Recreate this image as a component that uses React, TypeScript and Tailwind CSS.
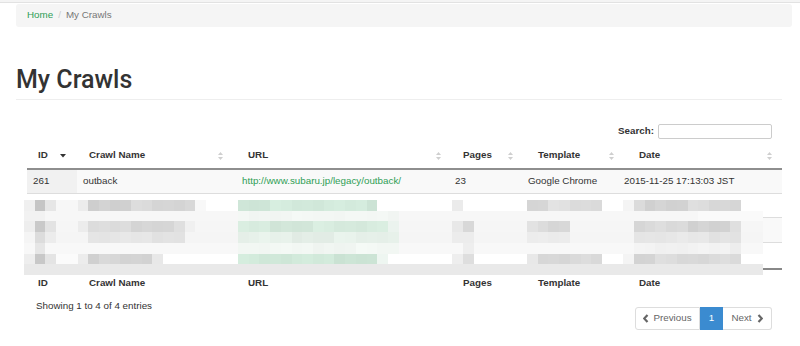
import React from 'react';

// blurred-out rows in the screenshot: a 69 x 7 mosaic of ~10.7px cells
type Seg = [number, number, string, number?];

const mosaicRows: { base: string; segs: Seg[] }[] = [
  {
    base: '#ffffff',
    segs: [
      [0, 1, '#f0f0f0'], [1, 2, '#c5c5c5'], [2, 3, '#e6e6e6'], [3, 5, '#f7f7f7'], [5, 6, '#ececec'],
      [6, 16, '#d6d6d6', 8], [16, 17, '#f8f8f8'], [20, 33, '#d2e9db', 6], [40, 41, '#ebebeb'],
      [47, 54, '#dcdcdc', 8], [56, 57, '#f4f4f4'], [57, 67, '#d8d8d8', 8],
    ],
  },
  { base: '#f7f7f7', segs: [[0, 2, '#f2f2f2'], [20, 35, '#f3f7f4', 2], [63, 69, '#fafafa']] },
  {
    base: '#f6f6f6',
    segs: [
      [0, 1, '#eeeeee'], [1, 2, '#c9c9c9'], [2, 3, '#e3e3e3'], [5, 6, '#ececec'], [6, 15, '#dadada', 6],
      [15, 16, '#f0f0f0'], [20, 34, '#d6eadd', 6], [34, 35, '#ebf3ee'], [40, 41, '#e8e8e8'], [41, 42, '#d8d8d8'],
      [47, 48, '#e2e2e2'], [48, 51, '#dadada', 4], [57, 67, '#d8d8d8', 8],
    ],
  },
  {
    base: '#f5f5f5',
    segs: [
      [1, 2, '#dcdcdc'], [2, 3, '#ececec'], [6, 15, '#e5e5e5', 4], [20, 35, '#e6f0e9', 5], [40, 42, '#ececec'],
      [47, 51, '#ebebeb', 3], [57, 67, '#e6e6e6', 5],
    ],
  },
  {
    base: '#f8f8f8',
    segs: [[1, 2, '#e6e6e6'], [20, 35, '#f2f7f3', 3], [41, 42, '#eeeeee'], [57, 67, '#f1f1f1', 4]],
  },
  {
    base: '#ffffff',
    segs: [
      [0, 1, '#eeeeee'], [1, 2, '#c8c8c8'], [2, 3, '#e4e4e4'], [3, 5, '#fbfbfb'], [5, 6, '#ececec'],
      [6, 12, '#d4d4d4', 6], [12, 13, '#e8e8e8'], [20, 33, '#d0e8d9', 6], [33, 34, '#eef6f1'],
      [40, 41, '#eeeeee'], [41, 42, '#dedede'], [47, 48, '#e8e8e8'], [48, 54, '#d8d8d8', 7], [56, 57, '#f4f4f4'],
      [57, 67, '#d9d9d9', 7],
    ],
  },
  { base: '#e9e9e9', segs: [] },
];

const jitter = [0, -5, 3, -2, 6, -7, 2, 4, -3, 5, -1, -6, 1];

const shade = (hex: string, d: number) => {
  const n = parseInt(hex.slice(1), 16);
  const ch = [(n >> 16) & 255, (n >> 8) & 255, n & 255].map((v) => Math.max(0, Math.min(255, Math.round(v + d))));
  return `rgb(${ch[0]},${ch[1]},${ch[2]})`;
};

const cellColor = (r: number, c: number) => {
  const row = mosaicRows[r];
  const seg = row.segs.find(([a, b]) => c >= a && c < b);
  if (!seg) return row.base;
  const amp = seg[3] ?? 0;
  return shade(seg[2], (jitter[(r * 7 + c * 3) % jitter.length] * amp) / 7);
};

const Mosaic = () => (
  <div className="absolute left-[-3px] top-[57px] z-10 grid grid-cols-[repeat(69,10.71px)]">
    {mosaicRows.map((_, r) =>
      Array.from({ length: 69 }, (_, c) => (
        <div key={`${r}-${c}`} className="h-[10.71px]" style={{ background: cellColor(r, c) }} />
      ))
    )}
  </div>
);

const SortBoth = () => (
  <svg width="5" height="8" viewBox="0 0 5 8" className="shrink-0">
    <polygon points="0,3 2.5,0 5,3" fill="#cfcfcf" />
    <polygon points="0,5 2.5,8 5,5" fill="#cfcfcf" />
  </svg>
);

const SortDesc = () => (
  <svg width="6" height="4" viewBox="0 0 6 4" className="shrink-0">
    <polygon points="0,0 6,0 3,3.5" fill="#333" />
  </svg>
);

const headCols = [
  { label: 'ID', cls: 'w-[52px] pl-[11px]', icon: <SortDesc />, gap: 'ml-[12px]' },
  { label: 'Crawl Name', cls: 'w-[157px] pl-[10px] pr-[13px]', icon: <SortBoth />, gap: 'ml-auto' },
  { label: 'URL', cls: 'w-[218px] pl-[12px] pr-[13px]', icon: <SortBoth />, gap: 'ml-auto' },
  { label: 'Pages', cls: 'w-[73px] pl-[9px] pr-[14px]', icon: <SortBoth />, gap: 'ml-auto' },
  { label: 'Template', cls: 'w-[101px] pl-[11px] pr-[14px]', icon: <SortBoth />, gap: 'ml-auto' },
  { label: 'Date', cls: 'w-[154px] pl-[11px] pr-[10px]', icon: <SortBoth />, gap: 'ml-auto' },
];

const bodyCols = [
  'w-[50px] pl-[6px] bg-[#f1f1f1]',
  'w-[159px] pl-[6px]',
  'w-[213px] pl-[6px] text-[#2f9e55]',
  'w-[73px] pl-[6px]',
  'w-[96px] pl-[6px]',
  'w-[164px] pl-[6px]',
];

const first = ['261', 'outback', 'http://www.subaru.jp/legacy/outback/', '23', 'Google Chrome', '2015-11-25 17:13:03 JST'];

const ChevronLeft = () => (
  <svg width="6" height="9" viewBox="0 0 6 9">
    <polyline points="4.5,1 1.2,4.5 4.5,8" fill="none" stroke="#666" strokeWidth="2.2" />
  </svg>
);

const ChevronRight = () => (
  <svg width="6" height="9" viewBox="0 0 6 9">
    <polyline points="1.5,1 4.8,4.5 1.5,8" fill="none" stroke="#666" strokeWidth="2.2" />
  </svg>
);

export default function App() {
  return (
    <div className="h-[346px] w-[800px] overflow-hidden bg-white font-['Liberation_Sans',Arial,sans-serif] text-[9.8px] text-[#333]">
      <div className="h-[3px] border-b border-[#e2e2e2] bg-[#f4f4f4]" />
      <div className="pl-[16px] pr-[8px]">
        <nav className="mt-[1px] flex h-[23px] items-center rounded-[3px] bg-[#f5f5f5] px-[11px]">
          <a className="text-[#2f9e55]">Home</a>
          <span className="px-[5px] text-[#ccc]">/</span>
          <span className="text-[#777]">My Crawls</span>
        </nav>

        <div className="pr-[10px]">
          <h1 className="mt-[39px] font-['Roboto','Liberation_Sans',sans-serif] text-[25px] leading-[28px] font-medium text-[#333]">
            My Crawls
          </h1>
          <div className="mt-[5px] h-px bg-[#eee]" />

          <div className="mt-[24px] flex h-[15px] items-center justify-end pr-[10px]">
            <label className="font-bold">Search:</label>
            <input className="ml-[4px] h-[15px] w-[114px] rounded-[2px] border border-[#ccc] bg-white outline-none" />
          </div>

          <div className="relative ml-[11px]">
            <div className="mt-[4px] flex h-[27px] items-center border-b-2 border-[#8e8e8e] font-bold">
              {headCols.map((c) => (
                <div key={c.label} className={`flex items-center ${c.cls}`}>
                  <span>{c.label}</span>
                  <span className={c.gap}>{c.icon}</span>
                </div>
              ))}
            </div>

            <div className="flex h-[24px] border-b border-[#ddd] bg-[#f9f9f9]">
              {first.map((t, i) => (
                <div key={i} className={`flex items-center ${bodyCols[i]}`}>
                  {t}
                </div>
              ))}
            </div>
            <div className="h-[24px] border-b border-[#ddd]" />
            <div className="h-[25px] border-b border-[#ddd] bg-[#f9f9f9]" />
            <div className="h-[25px]" />

            <div className="flex h-[28px] items-center border-t-2 border-[#888] font-bold">
              {headCols.map((c) => (
                <div key={c.label} className={`flex items-center ${c.cls}`}>
                  <span>{c.label}</span>
                </div>
              ))}
            </div>

            <Mosaic />

            <div className="mt-[4px] flex items-start justify-between pr-[10px]">
              <span className="pl-[9px] leading-[12px]">Showing 1 to 4 of 4 entries</span>
              <div className="mt-[7px] flex h-[23px] text-[#666]">
                <div className="flex w-[65px] items-center justify-center gap-[4px] rounded-l-[3px] border border-[#ddd]">
                  <ChevronLeft />
                  <span>Previous</span>
                </div>
                <div className="flex w-[23px] items-center justify-center border border-[#3b8bd0] bg-[#3b8bd0] text-white">
                  1
                </div>
                <div className="flex w-[49px] items-center justify-center gap-[5px] rounded-r-[3px] border border-l-0 border-[#ddd]">
                  <span>Next</span>
                  <ChevronRight />
                </div>
              </div>
            </div>
          </div>
        </div>
      </div>
    </div>
  );
}
